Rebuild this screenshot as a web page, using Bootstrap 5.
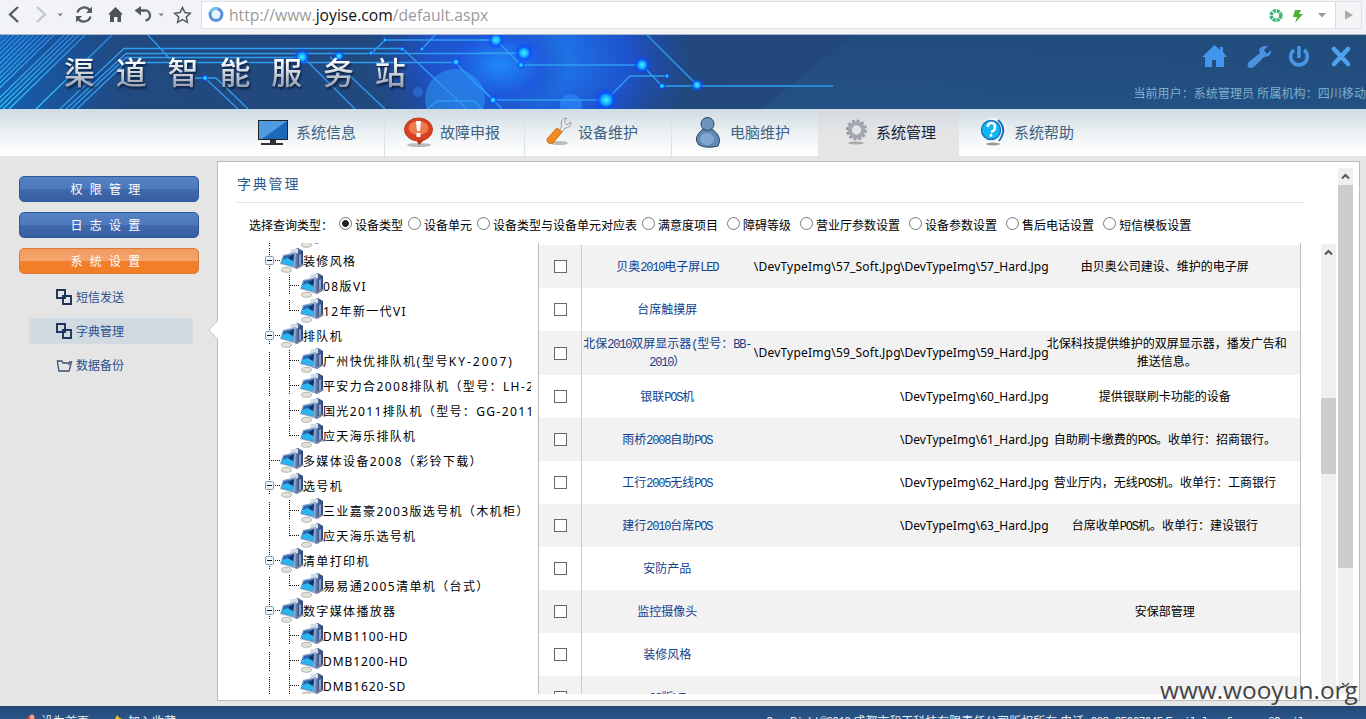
<!DOCTYPE html>
<html lang="zh-CN">
<head>
<meta charset="utf-8">
<title>渠道智能服务站</title>
<meta name="viewport" content="width=device-width, initial-scale=1">
<link rel="stylesheet" href="https://cdn.jsdelivr.net/npm/bootstrap@5.3.0/dist/css/bootstrap.min.css">
<style>
body{font:12px/18px "Noto Sans","Noto Sans CJK SC",sans-serif;color:#000;background:#e5e5e5;height:719px;overflow:hidden}
svg{display:block;flex:none}
.bar{height:35px;background:#f1f3f7;border-bottom:1px solid #aab4c4}
.tools{width:201px}
.addr{height:28px;margin-top:1px;background:#fff;border:1px solid #dfe1e6;font-size:15.7px;line-height:26px;color:#9a9a9a;font-family:"Open Sans",sans-serif}
.addr b{font-weight:400;color:#111}
.go{width:26px;border-left:1px solid #ddd;background:#f4f4f6}
.hero{height:74px;background:linear-gradient(90deg,#214a80 0,#22487c 60%,#1f4677 100%)}
.hero .art{position:absolute;left:0;top:0}
.logo{padding-left:64px;font:500 31px/72px "Noto Sans CJK SC",sans-serif;letter-spacing:20.8px;background:linear-gradient(#fff 35%,#9aa4b4 68%);-webkit-background-clip:text;background-clip:text;color:transparent;filter:drop-shadow(1px 2px 1px #0a1c3c)}
.who{color:#7fb0d0;white-space:nowrap;height:18px;letter-spacing:.07px}
.menu{height:47px;background:linear-gradient(#cfdce4,#f3f6f7 65%,#fff);padding-left:244px}
.menu a{color:#3f6284;font-size:15px;line-height:22px;text-decoration:none;height:47px;border-right:1px solid #dde2e5;padding-bottom:2px}
.menu a.on{background:linear-gradient(#d2dae0,#e5e5e5 50%);color:#12233c}
.side{width:217px;padding:20px 18px 0 19px}
.sbtn{height:26px;border-radius:5px;border:1px solid #315a9d;background:linear-gradient(#5480c4,#5079bd 48%,#4069ae 52%,#375f9f);color:#fff;letter-spacing:7.2px;font-size:12px;line-height:25px;text-align:center;margin-bottom:10px}
.sbtn.on{border-color:#d9793c;background:linear-gradient(#f29a5f,#f4a56e 48%,#f07f2c 52%,#f37d22)}
.sub{height:26px;margin:0 6px 8px 10px;padding-left:27px;padding-top:1px;color:#28508c;border-radius:4px}
.sub.on{background:#d2dae1}
.main{width:1143px;height:540px;margin-top:5px;background:#fff;border:1px solid #bbb}
.notch{position:absolute;left:-10px;top:158px}
.ttl{font-size:14px;letter-spacing:1.8px;color:#2b5a92;height:41px;line-height:44px;margin-left:19px;width:1067px;border-bottom:1px solid #e2e2e2}
.query{padding:14px 0 0 31px;height:40px}
.query label{margin-right:5px;white-space:nowrap}
.query label.wide{margin-right:9px}
.query input{appearance:none;width:13px;height:13px;border:1px solid #777;border-radius:50%;margin:-6px 3px 0 0;background:#fff}
.query input:checked{background:radial-gradient(circle,#222 0 3px,#fff 3.8px)}
.tree{width:287px;height:451px;margin-left:26px;margin-right:7px;padding-left:18px;overflow:hidden}
.tree .inner{margin-top:-20px}
.node{height:25px;white-space:nowrap}
.node .lbl{letter-spacing:1.35px;display:inline-block;line-height:22px}
.node .lbl i{font-style:normal;letter-spacing:1.4px}
.node .lbl i.tight{letter-spacing:.9px}
.node .lbl i.loose{letter-spacing:2px}
.grid{width:764px;height:451px;border:1px solid #bbb;border-top:0;border-bottom:0;overflow:hidden;padding-top:2px}
.line{display:grid;grid-template-columns:43px 171px 147px 149px 1fr;height:43px;align-items:center;text-align:center}
.line:nth-child(odd){background:#f2f2f2}
.line.tall{height:44px}
.line .box{align-self:stretch;border-right:1px solid #ccc}
.line .box span{width:13px;height:13px;border:1px solid #666;background:#fff;margin-left:1px}
.line .nm{color:#12418e}
.line .ds{padding-right:18px;margin-left:-1px}
.line .ds.two{margin-left:-2px;padding-right:20px}
.line .pt{text-align:right;white-space:nowrap;letter-spacing:.05px}
.line .pt.soft{margin-right:-1px;letter-spacing:.2px}
.half{font:12px/12px "Liberation Mono",monospace;letter-spacing:-1.2px}
.ibar{width:15px;background:#efefef;height:450px}
.thumb{background:#cdcdcd}
.foot{height:13px;background:linear-gradient(#23497a,#2a5586);color:#e8eef5;overflow:hidden}
.foot div{height:18px;white-space:nowrap}
.foot>div{margin-top:7px}
.mark-url{position:absolute;left:1160px;top:672px;font:24.4px/36px "Open Sans",sans-serif;color:#444;z-index:5}
</style>
</head>
<body class="position-relative">
<svg width="0" height="0" class="position-absolute">
<defs>
<linearGradient id="cas" x2="1"><stop stop-color="#b9c8df"/><stop offset=".5" stop-color="#5673a8"/><stop offset="1" stop-color="#2b4376"/></linearGradient>
<symbol id="pc" viewBox="0 0 24 25"><path d="M12 2 18 0 23 3V17L17 21 11 19Z" fill="url(#cas)"/><path d="M11 1H18V5L14 6 10 5Z" fill="#d3dbe5"/><path d="M18 6 22 4V17L18 19Z" fill="#3d5588"/><path d="M19 7 21 6V16L19 18Z" fill="#8ea3c8"/><path d="M3 7 16 4 15 20 0 16Z" fill="#8fa5c8"/><path d="M4 8 14 6 13 18 1 15Z" fill="#2a66b0"/><path d="M2 12 8 10 13 11 13 18 1 15Z" fill="#2bb4ee"/><path d="M8 10 14 6 13 13Z" fill="#14306c"/><ellipse cx="6.500" cy="21.800" rx="5" ry="2.500" fill="#e2e2da" stroke="#8c8c88" stroke-width=".6"/><path d="M17 20 23.500 16.500" stroke="#889" stroke-width="1.500"/></symbol>
<symbol id="two" viewBox="0 0 17 17"><path d="M1 1H9V9H1ZM7 7H15V15H7Z" fill="none" stroke="#1d3459" stroke-width="1.900"/></symbol>
</defs></svg>

<div class="bar d-flex">
 <div class="tools flex-shrink-0">
 <svg width="200" height="30" fill="none" stroke="#555b63" stroke-width="2.300"><path d="M18 7 10 14.500 18 22"/><path d="M37 7 45 14.500 37 22" stroke="#c3c7cc"/><path d="M57.500 13.500h5.500l-2.700 3zM158.500 13.500h5.500l-2.700 3z" fill="#888" stroke="none"/><path d="M77.500 12.500A7 7 0 0 1 90 10.500M90.500 16.500A7 7 0 0 1 78 18.500"/><path d="M92 6.500V13H86ZM76 22.500V16H82Z" fill="#555b63" stroke="none"/><path d="M115.500 7 108 14.500H110V22H114V17H117.500V22H121V14.500H123Z" fill="#4d535b" stroke="none"/><path d="M138 10.500H144.500A5 5 0 0 1 145.500 20.500"/><path d="M134.500 10.500 141 6V15.500Z" fill="#555b63" stroke="none"/><path d="M182.500 7.500 184.900 12.600 190.300 13.200 186.300 16.900 187.400 22.300 182.500 19.600 177.600 22.300 178.700 16.900 174.700 13.200 180.100 12.600Z" stroke-width="1.500"/></svg>
 </div>
 <div class="addr d-flex flex-grow-1 me-1 ps-1">
  <svg width="22" height="26" class="me-1" viewBox="0 0 22 26"><circle cx="10" cy="12.500" r="6" fill="#e5f4fd" stroke="#5b90e0" stroke-width="3"/><path d="M4.300 10A6 6 0 0 1 12 6.800" fill="none" stroke="#70c8ee" stroke-width="2.600"/></svg>
  <span style="margin-left:-3px">http://www.<b>joyise.com</b>/default.aspx</span>
  <svg width="69" height="26" class="ms-auto"><circle cx="10" cy="13.500" r="4.800" fill="none" stroke="#3cb878" stroke-width="3.600" stroke-dasharray="3 .8"/><path d="M29 8H35L33 12H37L29 21 31 15H27Z" fill="#4bb035"/><path d="M52 11h8l-4 4.500z" fill="#999"/></svg>
  <div class="go"><svg width="24" height="26"><path d="M9 8.500V17.500L17 13Z" fill="#aaa"/></svg></div>
 </div>
</div>

<header class="hero position-relative overflow-hidden d-flex justify-content-between">
 <svg class="art" width="1366" height="74">
  <defs><radialGradient id="gl"><stop stop-color="#1f8af8"/><stop offset=".6" stop-color="#1d55dc" stop-opacity=".85"/><stop offset="1" stop-color="#2148b0" stop-opacity="0"/></radialGradient>
  <radialGradient id="dot"><stop stop-color="#3ff4ff"/><stop offset=".4" stop-color="#14aaff"/><stop offset=".6" stop-color="#0b55ff" stop-opacity=".8"/><stop offset="1" stop-color="#0b3cff" stop-opacity="0"/></radialGradient>
  <linearGradient id="lf" x2="1"><stop stop-color="#0c6fd0"/><stop offset="1" stop-color="#0c5ac0" stop-opacity="0"/></linearGradient>
  <linearGradient id="ray" gradientUnits="userSpaceOnUse" x1="0" y1="0" x2="0" y2="74"><stop stop-color="#2b83e6"/><stop offset="1" stop-color="#2fc8f4"/></linearGradient>
  <linearGradient id="rt" x2="0" y2="1"><stop stop-color="#22507f"/><stop offset="1" stop-color="#26598c"/></linearGradient></defs>
  <rect width="130" height="74" fill="url(#lf)" opacity=".6"/>
  <path d="M853 0H1366V74H762Z" fill="url(#rt)" opacity=".55"/>
  <ellipse cx="530" cy="26" rx="165" ry="110" fill="url(#gl)"/><ellipse cx="500" cy="30" rx="70" ry="50" fill="url(#gl)"/><circle cx="455" cy="64" r="30" fill="#2f9bf5" opacity=".5"/><circle cx="418" cy="57" r="5" fill="#3180ee" opacity=".5"/><circle cx="571" cy="70" r="11" fill="#2f8cff" opacity=".6"/>
  <g id="rays" fill="none" stroke="url(#ray)" stroke-width="1.300"></g>
  <g fill="none" stroke="#2e9df2" stroke-width="1.300">
   <path d="M60 74 124 13.500H402M66 74 126 18.500H520M71 74 126 22.500H300M77 74 126 27.500H455L502 74M402 13 467 74M303 22 355 74M330 22 385 74M148 0 170 24M195 43H216L248 74M205 43 238 74M371 19 385 5H496M422 14 435 0M427 74 437 66H474L482 74"/>
   <path d="M480 5H496L521 30H642L662 51H833M480 18H524M480 51 493 65H606L630 41H668M647 0 697 50"/>
  </g>
  <g fill="url(#dot)"><circle cx="496" cy="5" r="9"/><circle cx="524" cy="18" r="10"/><circle cx="302" cy="22" r="9"/><circle cx="339" cy="21" r="6"/><circle cx="606" cy="65" r="12"/><circle cx="642" cy="30" r="9"/><circle cx="697" cy="50" r="7"/><circle cx="662" cy="51" r="4"/><circle cx="667" cy="41" r="3"/><circle cx="521" cy="30" r="4"/><circle cx="493" cy="65" r="5"/><circle cx="456" cy="27" r="5"/><circle cx="402" cy="14" r="3"/><circle cx="422" cy="14" r="3"/><circle cx="385" cy="5" r="3"/><circle cx="371" cy="18" r="3"/><circle cx="205" cy="43" r="4"/></g>
 </svg>
 <div class="logo position-relative">渠道智能服务站</div>
 <div class="position-relative d-flex flex-column align-items-end">
  <svg width="170" height="50" fill="#4096ee"><path d="M18.500 10 6 22H9V32H16V25H20V32H28V22H31L27 17V12H24V15Z"/><path d="M52.500 32.500Q50 29 54 26L64 18Q61 13 68 11H72L68 15 71 19 75 15Q76 22 68 22L59 31Q56 34 52.500 32.500Z" fill="#4a91e0"/><path d="M98 15A8.300 8.300 0 1 0 108 15M103 11V23" fill="none" stroke="#4795e4" stroke-width="3.600"/><path d="M138 14 152 29M152 14 138 29" stroke="#4da1ee" stroke-width="4.600" stroke-linecap="round"/></svg>
  <div class="who">当前用户：系统管理员 所属机构：四川移动</div>
 </div>
</header>

<nav class="menu d-flex">
 <a href="#" class="d-flex align-items-center" style="width:141px;padding-left:13px"><svg width="39" height="34"><path d="M1 5H31V25H1Z" fill="#222"/><path d="M2 6H30V24H2Z" fill="#1d68b8"/><path d="M2 6H30L5 24H2Z" fill="#4f9be0"/><path d="M13 25H19V28H26V30H4V28H13Z" fill="#2c3238"/></svg>系统信息</a>
 <a href="#" class="d-flex align-items-center" style="width:140px;padding-left:18px"><svg width="37" height="34"><ellipse cx="16" cy="30" rx="12" ry="2" fill="#bbb"/><path d="M12 23 16 30 22 24Z" fill="#b92a14"/><ellipse cx="15.500" cy="14.500" rx="14" ry="11.500" fill="#d84022" stroke="#c33b1d"/><ellipse cx="15.500" cy="13" rx="10" ry="7" fill="#f07a50"/><path d="M13 6H18L17 16H14ZM13.500 18H17.500V22H13.500Z" fill="#fff"/></svg>故障申报</a>
 <a href="#" class="d-flex align-items-center" style="width:147px;padding-left:20px"><svg width="33" height="34"><ellipse cx="14" cy="28" rx="9" ry="2" fill="#bbb"/><path d="M14 16 17 11Q14 4 22 3L19 7 22 10 26 7Q26 13 20 13L16 18Z" fill="#eee" stroke="#999"/><path d="M2 24 12 13 17 17 8 28Q2 30 2 24Z" fill="#f78b21" stroke="#c86810"/></svg>设备维护</a>
 <a href="#" class="d-flex align-items-center border-0" style="width:146px;padding-left:22px"><svg width="36" height="34"><path d="M9 14Q-2 23 5 30Q13 34 24 31Q29 22 18 14Z" fill="#6089b6" stroke="#29445e"/><circle cx="13.500" cy="9" r="6.500" fill="#6c94bd" stroke="#29445e"/><ellipse cx="13" cy="24" rx="7" ry="6" fill="#7ea8d2"/></svg>电脑维护</a>
 <a href="#" class="on d-flex align-items-center border-0" style="width:141px;padding-left:24px"><svg width="34" height="34"><ellipse cx="14" cy="28" rx="8" ry="1.500" fill="#aaa"/><circle cx="14.500" cy="15" r="9" fill="none" stroke="#9497a1" stroke-width="3" stroke-dasharray="2.700 2"/><circle cx="14.500" cy="15" r="6.700" fill="none" stroke="#a2a6b0" stroke-width="4"/></svg>系统管理</a>
 <a href="#" class="d-flex align-items-center border-0" style="padding-left:20px"><svg width="35" height="34"><circle cx="14" cy="16" r="13" fill="#f3f8fa"/><ellipse cx="14" cy="29" rx="7" ry="1.500" fill="#999"/><circle cx="12" cy="15" r="9.500" fill="#12b5f3" stroke="#1875bd" stroke-width="1.500"/><path d="M19 5Q29 14 20 26" fill="none" stroke="#1b71b1" stroke-width="2"/><path d="M8.500 12Q9 8 12.500 8T16 12T12 17M12 19V22" fill="none" stroke="#fff" stroke-width="2.500"/></svg>系统帮助</a>
</nav>

<div class="d-flex" style="height:550px">
 <aside class="side flex-shrink-0">
  <div class="sbtn">权限管理</div><div class="sbtn">日志设置</div><div class="sbtn on">系统设置</div>
  <div class="sub d-flex align-items-center"><svg width="20" height="17"><use href="#two" width="17" height="17"/></svg>短信发送</div>
  <div class="sub on d-flex align-items-center"><svg width="20" height="17"><use href="#two" width="17" height="17"/></svg>字典管理</div>
  <div class="sub d-flex align-items-center"><svg width="20" height="14"><path d="M1.500 3V2H6L7 4H13V6M1.500 3 3 12H13L15.500 3H13" fill="none" stroke="#3b5070" stroke-width="1.300"/></svg>数据备份</div>
 </aside>
 <main class="main position-relative d-flex">
  <svg class="notch" width="11" height="20"><path d="M11 0 1 10 11 20Z" fill="#fff"/><path d="M10 0 1 10 10 20" fill="none" stroke="#ccc"/></svg>
  <div class="flex-shrink-0" style="width:1118px">
   <div class="ttl">字典管理</div>
   <div class="query d-flex">
    <span style="width:90px">选择查询类型：</span>
    <label><input type="radio" name="q" checked class="align-middle">设备类型</label><label><input type="radio" name="q" class="align-middle">设备单元</label><label><input type="radio" name="q" class="align-middle">设备类型与设备单元对应表</label><label class="wide"><input type="radio" name="q" class="align-middle">满意度项目</label><label class="wide"><input type="radio" name="q" class="align-middle">障碍等级</label><label class="wide"><input type="radio" name="q" class="align-middle">营业厅参数设置</label><label class="wide"><input type="radio" name="q" class="align-middle">设备参数设置</label><label class="wide"><input type="radio" name="q" class="align-middle">售后电话设置</label><label><input type="radio" name="q" class="align-middle">短信模板设置</label>
   </div>
   <div class="d-flex">
    <div class="tree"><div class="inner" id="tree"></div></div>
    <div class="grid" id="grid"></div>
    <div class="ibar d-flex flex-column" style="margin-left:20px;margin-top:1px"><svg width="15" height="154"><path d="M4 10.500 7.500 7 11 10.500" fill="none" stroke="#555" stroke-width="2"/></svg><div class="thumb" style="height:76px"></div></div>
   </div>
  </div>
  <div class="ibar" style="margin-top:6px;height:526px;margin-left:2px"><svg width="15" height="17"><path d="M4 10.500 7.500 7 11 10.500" fill="none" stroke="#555" stroke-width="2"/></svg><div class="thumb" style="height:383px"></div><svg width="15" height="126"><path d="M4 115 7.500 118.500 11 115" fill="none" stroke="#555" stroke-width="1.500"/></svg></div>
 </main>
</div>

<footer class="foot d-flex">
 <div class="d-flex" style="width:766px;padding-left:23px"><svg width="18" height="18"><path d="M0 9 7 2 13 6 10 15H3Z" fill="#d63c20"/><circle cx="9" cy="4" r="2.500" fill="#f0a090"/></svg><span style="width:70px">设为首页</span><svg width="17" height="18"><path d="M6 2 8.500 5 12 6 9 12 2 11 0 7 4 6Z" fill="#f3c400"/></svg><span>加入收藏</span></div>
 <div id="copy">CopyRight©2013 成都市和天科技有限责任公司版权所有 电话:028-85067645 Email:loveforever@Gmail.com</div>
</footer>
<div class="mark-url">www.wooyun.org</div>

<script src="https://cdn.jsdelivr.net/npm/bootstrap@5.3.0/dist/js/bootstrap.bundle.min.js"></script>
<script>
const half = s => s.replace(/[\x21-\x7e©]+/g, m => `<span class="half">${m}</span>`);
const latin = s => s.replace(/[\x21-\x7e]+/g, m => `<i class="${/^DMB/.test(m) ? 'tight' : /^KY|^\($/.test(m) ? 'loose' : ''}">${m}</i>`);
// [kind, label]: g = group with toggle, n = top-level leaf, c = child, e = last child
const nodes = [['e',''],['g','装修风格'],['c','08版VI'],['e','12年新一代VI'],['g','排队机'],['c','广州快优排队机(型号KY-2007)'],['c','平安力合2008排队机（型号：LH-2'],['c','国光2011排队机（型号：GG-2011'],['e','应天海乐排队机'],['n','多媒体设备2008（彩铃下载）'],['g','选号机'],['c','三业嘉豪2003版选号机（木机柜）'],['e','应天海乐选号机'],['g','清单打印机'],['e','易易通2005清单机（台式）'],['g','数字媒体播放器'],['c','DMB1100-HD'],['c','DMB1200-HD'],['c','DMB1620-SD']];
document.getElementById('tree').innerHTML = nodes.map(([k, t]) => {
  const top = k === 'g' || k === 'n', w = top ? 40 : 60;
  let d = top ? 'M7.500 0V21M9 12.500H18' : `M7.500 4V23M27.500 2V${k === 'e' ? 13 : 21}M28 12.500H38`;
  const box = k === 'g' ? '<rect x="3.500" y="8.500" width="8" height="8" rx="1" fill="#eef6fa" stroke="#7b9cb8"/><path d="M5 12.500H10" stroke="#111"/>' : '';
  return `<div class="node d-flex"><svg width="${w}" height="25" class="overflow-visible"><path d="${d}" fill="none" stroke="#111" stroke-dasharray="1 1"/>${box}<use href="#pc" x="${w - 22}" y="0" width="24" height="25"/></svg><span class="lbl" style="padding:3px 0 0 1px">${latin(t)}</span></div>`;
}).join('');

const rows = [['贝奥2010电子屏LED','57_Soft','57_Hard','由贝奥公司建设、维护的电子屏'],['台席触摸屏'],['北保2010双屏显示器(型号：BB-<br>2010）','59_Soft','59_Hard','北保科技提供维护的双屏显示器，播发广告和<br>推送信息。'],['银联POS机','','60_Hard','提供银联刷卡功能的设备'],['雨桥2008自助POS','','61_Hard','自助刷卡缴费的POS。收单行：招商银行。'],['工行2005无线POS','','62_Hard','营业厅内，无线POS机。收单行：工商银行'],['建行2010台席POS','','63_Hard','台席收单POS机。收单行：建设银行'],['安防产品'],['监控摄像头','','','安保部管理'],['装修风格'],['08版VI']];
const path = f => f ? `\\DevTypeImg\\${f}.Jpg` : '';
const lines = s => s.split('<br>').map(half).join('<br>');
document.getElementById('grid').innerHTML = rows.map(([n, a, b, d = ''], i) =>
  `<div class="line${i === 2 ? ' tall' : ''}"><div class="box d-flex align-items-center justify-content-center"><span></span></div><div class="nm text-nowrap">${lines(n)}</div><div class="pt soft">${path(a)}</div><div class="pt">${path(b)}</div><div class="ds text-nowrap${i === 2 ? ' two' : ''}">${lines(d)}</div></div>`).join('');
document.getElementById('copy').innerHTML = half(document.getElementById('copy').textContent);

// diagonal circuit traces at the left of the banner
document.getElementById('rays').innerHTML = [4,9,14,19,24,29,34,39,44,49,54,64,69,74,79,85,112].map(x => `<path d="M${x} 0 ${x - 76} 74"/>`).join('');
</script>
</body>
</html>
